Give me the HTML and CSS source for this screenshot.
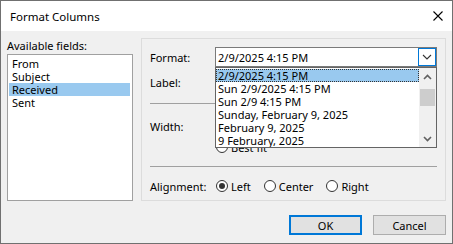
FILE: index.html
```html
<!DOCTYPE html>
<html lang="en">

<head>
    <meta charset="UTF-8">
    <meta name="viewport" content="width=device-width, initial-scale=1.0">
    <title>Format Columns</title>
    <link rel="stylesheet" href="styles.css">
</head>

<body>
    <div class="window">
        <div class="titlebar">
            <span class="title">Format Columns</span>
            <svg class="close" width="10" height="10" viewBox="0 0 10 10">
                <path d="M0.5 0.5 L9.5 9.5 M9.5 0.5 L0.5 9.5" stroke="#000" stroke-width="1.1" fill="none" />
            </svg>
        </div>

        <div class="content">
            <div class="main">
                <div class="fields">
                    <div class="fields-label">Available fields:</div>
                    <ul class="field-list">
                        <li>From</li>
                        <li>Subject</li>
                        <li class="selected">Received</li>
                        <li>Sent</li>
                    </ul>
                </div>

                <div class="panel">
                    <div class="row row-format">
                        <span class="lbl">Format:</span>
                        <div class="combo">
                            <span class="combo-text">2/9/2025 4:15 PM</span>
                            <span class="combo-btn">
                                <svg width="10" height="6" viewBox="0 0 10 6">
                                    <path d="M1 1 L5 5 L9 1" stroke="#333" stroke-width="1.1" fill="none" />
                                </svg>
                            </span>
                        </div>
                    </div>
                    <div class="row row-label">
                        <span class="lbl">Label:</span>
                        <div class="textbox"></div>
                    </div>
                    <div class="sep"></div>
                    <div class="row row-width">
                        <span class="lbl">Width:</span>
                        <div class="textbox"></div>
                    </div>
                    <div class="row row-bestfit">
                        <span class="lbl"></span>
                        <span class="radio"><span class="circle"></span>Best fit</span>
                    </div>
                    <div class="sep sep-2"></div>
                    <div class="row row-align">
                        <span class="lbl">Alignment:</span>
                        <span class="radio"><span class="circle checked"></span>Left</span>
                        <span class="radio"><span class="circle"></span>Center</span>
                        <span class="radio"><span class="circle"></span>Right</span>
                    </div>

                    <!-- open dropdown of the format combo -->
                    <div class="dropdown">
                        <ul class="drop-items">
                            <li class="current">2/9/2025 4:15 PM</li>
                            <li>Sun 2/9/2025 4:15 PM</li>
                            <li>Sun 2/9 4:15 PM</li>
                            <li>Sunday, February 9, 2025</li>
                            <li>February 9, 2025</li>
                            <li>9 February, 2025</li>
                        </ul>
                        <div class="scrollbar">
                            <div class="sb-btn">
                                <svg width="9" height="6" viewBox="0 0 9 6">
                                    <path d="M1 5 L4.5 1.5 L8 5" stroke="#606060" stroke-width="1.6" fill="none" />
                                </svg>
                            </div>
                            <div class="sb-track">
                                <div class="sb-thumb"></div>
                            </div>
                            <div class="sb-btn">
                                <svg width="9" height="6" viewBox="0 0 9 6">
                                    <path d="M1 1 L4.5 4.5 L8 1" stroke="#606060" stroke-width="1.6" fill="none" />
                                </svg>
                            </div>
                        </div>
                    </div>
                </div>
            </div>

            <div class="buttons">
                <button class="btn btn-default">OK</button>
                <button class="btn">Cancel</button>
            </div>
        </div>
    </div>
</body>

</html>
```

FILE: styles.css
```css
* {
    box-sizing: border-box;
}

body {
    margin: 0;
    font-family: "Noto Sans", "Open Sans", sans-serif;
    font-size: 11px;
    color: #000;
    background: #fff;
}

.window {
    width: 453px;
    height: 244px;
    border: 1px solid #707070;
    display: flex;
    flex-direction: column;
}

.titlebar {
    height: 30px;
    background: #fff;
    display: flex;
    align-items: center;
    justify-content: space-between;
    padding: 0 9px 0 9px;
}

.title {
    font-size: 11.5px;
    padding-top: 1px;
}

.close {
    display: block;
}

.content {
    flex: 1;
    background: #f0f0f0;
    padding: 7px 6px 0 6px;
}

.main {
    display: flex;
    gap: 8px;
}

/* left list */
.fields {
    width: 126px;
}

.fields-label {
    height: 16px;
    line-height: 16px;
}

.field-list {
    list-style: none;
    margin: 0;
    height: 147px;
    padding: 2px 2px 0 1px;
    border: 1px solid #a0a0a0;
    background: #fff;
}

.field-list li {
    height: 13px;
    line-height: 13px;
    padding-left: 3px;
}

.field-list li.selected {
    background: #99c9ef;
}

/* right group */
.panel {
    position: relative;
    width: 305px;
    height: 163px;
    border: 1px solid #dcdcdc;
    padding: 8px 8px 0 8px;
}

.row {
    display: flex;
    align-items: center;
}

.lbl {
    width: 65px;
    flex-shrink: 0;
}

.row-format {
    height: 20px;
}

.row-label {
    height: 20px;
    margin-top: 5px;
}

.row-width {
    height: 20px;
    margin-top: 12px;
}

.row-bestfit {
    height: 16px;
    margin-top: 3px;
}

.row-align {
    height: 16px;
    margin-top: 11px;
}

.sep {
    height: 1px;
    background: #a0a0a0;
    margin-top: 11px;
}

.combo {
    width: 222px;
    height: 20px;
    border: 1px solid #7a7a7a;
    background: #fff;
    display: flex;
    align-items: center;
    justify-content: space-between;
    padding-left: 2px;
}

.combo-btn {
    width: 18px;
    height: 18px;
    border: 1px solid #0078d7;
    display: flex;
    align-items: center;
    justify-content: center;
}

.textbox {
    width: 222px;
    height: 20px;
    border: 1px solid #7a7a7a;
    background: #fff;
}

.radio {
    display: flex;
    align-items: center;
    gap: 3px;
    margin-right: 12px;
}

.circle {
    width: 12px;
    height: 12px;
    margin-left: 1px;
    border: 1px solid #333;
    border-radius: 50%;
    background: #fff;
    display: flex;
    align-items: center;
    justify-content: center;
}

.circle.checked::after {
    content: "";
    width: 6px;
    height: 6px;
    border-radius: 50%;
    background: #333;
}

/* dropdown popup */
.dropdown {
    position: absolute;
    left: 73px;
    top: 28px;
    width: 222px;
    height: 81px;
    border: 1px solid #646464;
    background: #fff;
    display: flex;
    overflow: hidden;
}

.drop-items {
    list-style: none;
    margin: 0;
    padding: 1px 0 0 0;
    flex: 1;
}

.drop-items li {
    height: 13px;
    line-height: 13px;
    padding-left: 2px;
    white-space: nowrap;
}

.drop-items li.current {
    background: #99c9ef;
    outline: 1px dotted #333;
    outline-offset: -1px;
}

.scrollbar {
    width: 17px;
    background: #f0f0f0;
    display: flex;
    flex-direction: column;
}

.sb-btn {
    height: 17px;
    display: flex;
    align-items: center;
    justify-content: center;
}

.sb-track {
    flex: 1;
    padding: 4px 1px 0 1px;
}

.sb-thumb {
    height: 17px;
    background: #cdcdcd;
}

/* bottom buttons */
.buttons {
    display: flex;
    justify-content: flex-end;
    gap: 11px;
    margin-top: 14px;
}

.btn {
    width: 73px;
    height: 20px;
    font-family: inherit;
    font-size: 11px;
    background: #e1e1e1;
    border: 1px solid #adadad;
    padding: 0;
}

.btn-default {
    border: 2px solid #0078d7;
}
```
